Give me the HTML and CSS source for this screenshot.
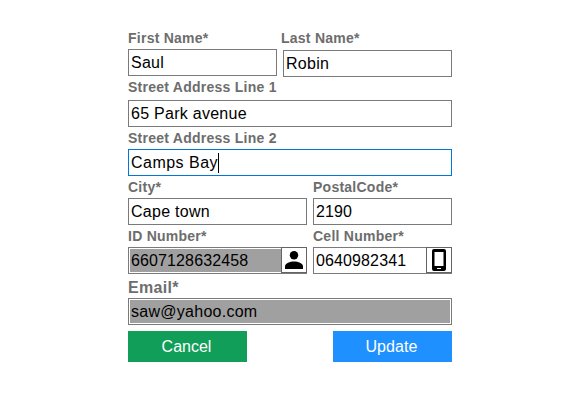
FILE: index.html
```html
<!DOCTYPE html>
<html lang="en">
<head>
<meta charset="utf-8">
<title>Edit customer</title>
<link rel="stylesheet" href="styles.css">
</head>
<body>
<main class="form">
  <div class="row names">
    <div class="field first"><div class="label">First Name*</div><div class="input"><span>Saul</span></div></div>
    <div class="field last"><div class="label">Last Name*</div><div class="input"><span>Robin</span></div></div>
  </div>
  <div class="field line1"><div class="label">Street Address Line 1</div><div class="input"><span>65 Park avenue</span></div></div>
  <div class="field line2"><div class="label">Street Address Line 2</div><div class="input focused"><span>Camps Bay</span><i class="caret"></i></div></div>
  <div class="row pair">
    <div class="field"><div class="label">City*</div><div class="input"><span>Cape town</span></div></div>
    <div class="field"><div class="label">PostalCode*</div><div class="input digits"><span>2190</span></div></div>
  </div>
  <div class="row pair">
    <div class="field"><div class="label">ID Number*</div><div class="input disabled digits"><span>6607128632458</span>
      <div class="icon"><svg width="24" height="24" viewBox="0 0 24 24"><circle cx="12" cy="7.300" r="4.200"/><path d="M3 21v-2.500C3 15.300 8 13.500 12 13.500s9 1.800 9 5V21z"/></svg></div></div></div>
    <div class="field"><div class="label">Cell Number*</div><div class="input digits"><span>0640982341</span>
      <div class="icon"><svg width="24" height="24" viewBox="0 0 24 24"><path fill-rule="evenodd" d="M7 1h10a2 2 0 0 1 2 2v18a2 2 0 0 1-2 2H7a2 2 0 0 1-2-2V3a2 2 0 0 1 2-2zM7.500 4v14h9V4zM10 20v1h4v-1z"/></svg></div></div></div>
  </div>
  <div class="field email"><div class="label">Email*</div><div class="input disabled"><span>saw@yahoo.com</span></div></div>
  <div class="actions"><button class="cancel">Cancel</button><button class="update">Update</button></div>
</main>
</body>
</html>
```
FILE: styles.css
```css
body {
  margin: 0;
  background: #fff;
  font-family: "Liberation Sans", Arial, sans-serif;
}
.form {
  width: 324px;
  margin-left: 128px;
  padding-top: 29px;
}
.row { display: grid; }
.names { grid-template-columns: 149px 169px; column-gap: 6px; }
.pair { grid-template-columns: 179px 139px; column-gap: 6px; }
.label {
  height: 22px;
  line-height: 22px;
  font-size: 14px;
  font-weight: bold;
  letter-spacing: 0.25px;
  color: #6d6d6d;
  white-space: nowrap;
}
.first .label { height: 20px; line-height: 18px; }
.last .label { height: 21px; line-height: 18px; margin-left: -2px; }
.line1 .label { height: 23px; line-height: 20px; }
.input {
  box-sizing: border-box;
  display: flex;
  align-items: center;
  height: 27px;
  padding-left: 2px;
  border: 1px solid #7a7a7a;
  background: #fff;
  color: #000;
  font-size: 16px;
  line-height: 25px;
  letter-spacing: 0.27px;
  white-space: nowrap;
}
.digits { letter-spacing: 0.12px; }
.focused { border-color: #0078d7; letter-spacing: 0.48px; }
.disabled {
  background: #a0a0a0;
  box-shadow: inset 0 0 0 1px #fff;
}
.caret { width: 1px; height: 20px; background: #000; }
.icon {
  box-sizing: border-box;
  width: 26px;
  height: 26px;
  margin: -1px -1px 0 auto;
  border: 1px solid #646464;
  background: #fff;
  align-self: flex-start;
}
.icon svg { display: block; }
.email .label {
  height: 24px;
  line-height: 28px;
  font-size: 16px;
  letter-spacing: 0.3px;
}
.actions { display: flex; justify-content: space-between; margin-top: 6px; }
button {
  width: 119px;
  height: 31px;
  padding: 0 2px 0 0;
  border: 0;
  color: #fff;
  font: 16px/31px "Liberation Sans", Arial, sans-serif;
}
.cancel { background: #119e59; }
.update { background: #1e90ff; letter-spacing: 0.1px; }
```
